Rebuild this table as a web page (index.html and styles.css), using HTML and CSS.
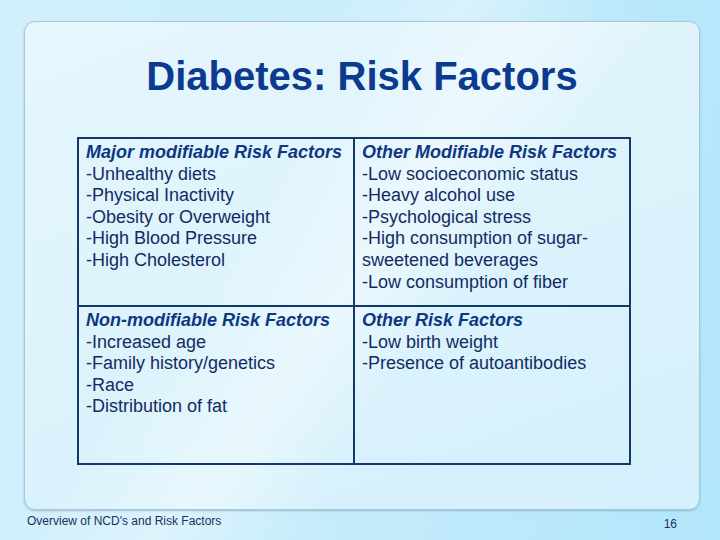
FILE: index.html
```html
<!DOCTYPE html>
<html>
<head>
<meta charset="utf-8">
<title>Diabetes: Risk Factors</title>
<link rel="stylesheet" href="styles.css">
</head>
<body>
<div class="slide">
  <div class="panel">
    <h1 class="title">Diabetes: Risk Factors</h1>
    <div class="tbl">
      <div class="cell c-left r-top">
        <div class="head">Major modifiable Risk Factors</div>
        <div>-Unhealthy diets</div>
        <div>-Physical Inactivity</div>
        <div>-Obesity or Overweight</div>
        <div>-High Blood Pressure</div>
        <div>-High Cholesterol</div>
      </div>
      <div class="cell r-top">
        <div class="head">Other Modifiable Risk Factors</div>
        <div>-Low socioeconomic status</div>
        <div>-Heavy alcohol use</div>
        <div>-Psychological stress</div>
        <div>-High consumption of sugar-<br>sweetened beverages</div>
        <div>-Low consumption of fiber</div>
      </div>
      <div class="cell c-left">
        <div class="head">Non-modifiable Risk Factors</div>
        <div>-Increased age</div>
        <div>-Family history/genetics</div>
        <div>-Race</div>
        <div>-Distribution of fat</div>
      </div>
      <div class="cell">
        <div class="head">Other Risk Factors</div>
        <div>-Low birth weight</div>
        <div>-Presence of autoantibodies</div>
      </div>
    </div>
  </div>
  <div class="footer">
    <span class="foot-text">Overview of NCD's and Risk Factors</span>
    <span class="page-num">16</span>
  </div>
</div>
</body>
</html>
```
FILE: styles.css
```css
html, body {
  margin: 0;
  padding: 0;
}
body {
  width: 720px;
  height: 540px;
  overflow: hidden;
  font-family: "Liberation Sans", Arial, sans-serif;
}
.slide {
  width: 720px;
  height: 540px;
  box-sizing: border-box;
  padding: 21px 0 0 24px;
  background:
    linear-gradient(120deg, rgba(255,255,255,0) 30%, rgba(255,255,255,0.35) 45%, rgba(255,255,255,0) 60%),
    linear-gradient(100deg, #d2f0fc 0%, #c6ecfb 50%, #b2e6fa 100%);
}
.panel {
  width: 676px;
  height: 489px;
  box-sizing: border-box;
  border: 1px solid #a9c6d6;
  border-radius: 11px;
  box-shadow: 0 1px 2px rgba(90,130,160,0.45);
  background:
    linear-gradient(125deg, rgba(255,255,255,0) 35%, rgba(255,255,255,0.4) 50%, rgba(255,255,255,0) 62%),
    linear-gradient(160deg, #e6f6fd 0%, #ddf3fc 50%, #d4f0fc 100%);
  padding-top: 31px;
}
.title {
  margin: 0;
  text-align: center;
  font-size: 40px;
  line-height: 46px;
  font-weight: bold;
  color: #0b3a8e;
}
.tbl {
  margin: 38px 0 0 52px;
  width: 554px;
  box-sizing: border-box;
  border: 2px solid #123a68;
  display: grid;
  grid-template-columns: 276px 274px;
  grid-template-rows: 168px 156px;
}
.cell {
  padding: 3px 6px 0 7px;
  font-size: 18px;
  line-height: 21.6px;
  color: #112c63;
}
.c-left {
  border-right: 2px solid #123a68;
}
.r-top {
  border-bottom: 2px solid #123a68;
}
.head {
  font-weight: bold;
  font-style: italic;
  color: #0e3782;
}
.footer {
  display: flex;
  justify-content: space-between;
  align-items: flex-start;
  margin-left: -24px;
  width: 720px;
  box-sizing: border-box;
  padding: 4px 43px 0 27px;
  font-size: 12px;
  line-height: 14px;
  color: #1a3260;
}
.page-num {
  margin-top: 3px;
}
```
